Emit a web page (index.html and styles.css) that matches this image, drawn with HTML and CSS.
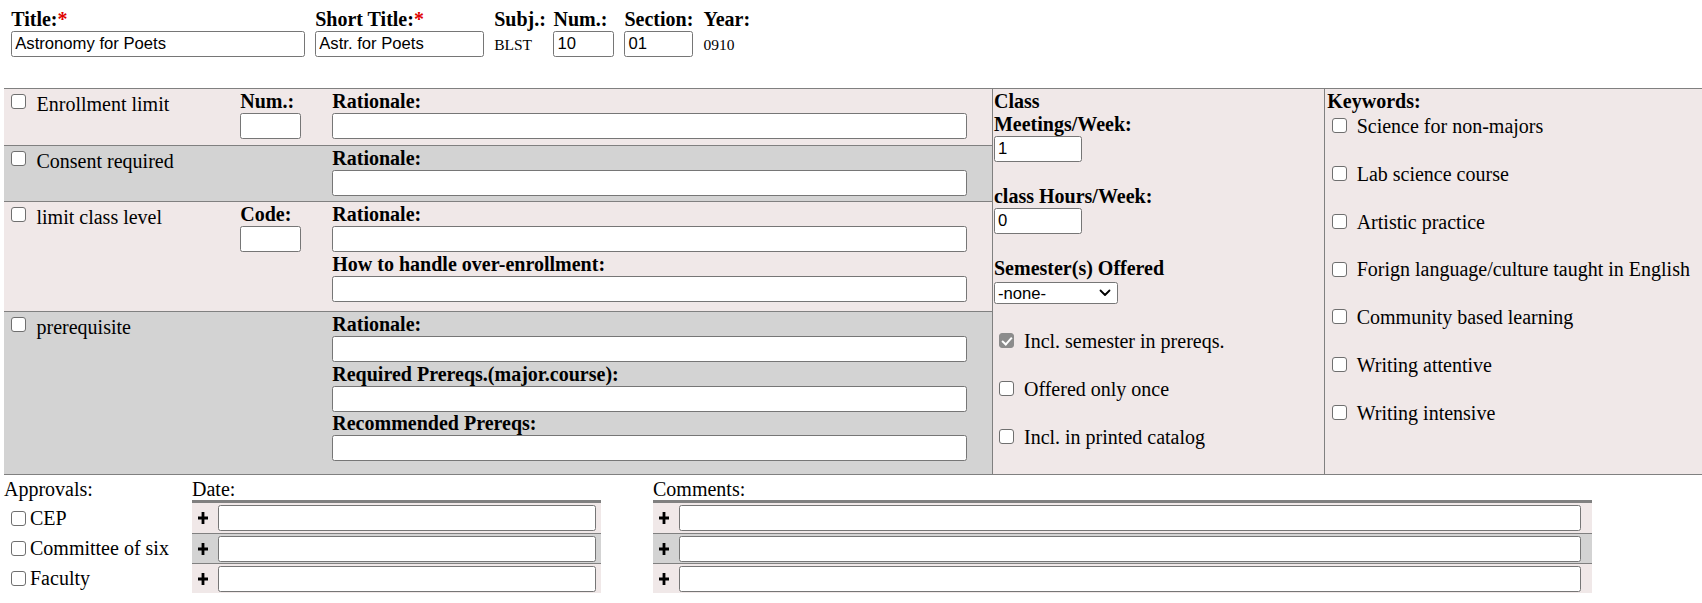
FILE: index.html
```html
<!DOCTYPE html>
<html lang="en">
<head>
<meta charset="utf-8">
<title>Course form</title>
<link rel="stylesheet" href="styles.css">
</head>
<body>
<header class="head">
  <div class="fld">
    <span class="lbl">Title:<span class="req">*</span></span>
    <input class="txt w-title" type="text" value="Astronomy for Poets">
  </div>
  <div class="fld">
    <span class="lbl">Short Title:<span class="req">*</span></span>
    <input class="txt w-short" type="text" value="Astr. for Poets">
  </div>
  <div class="fld">
    <span class="lbl">Subj.:</span>
    <span class="val">BLST</span>
  </div>
  <div class="fld">
    <span class="lbl">Num.:</span>
    <input class="txt w-num" type="text" value="10">
  </div>
  <div class="fld">
    <span class="lbl">Section:</span>
    <input class="txt w-sec" type="text" value="01">
  </div>
  <div class="fld">
    <span class="lbl">Year:</span>
    <span class="val">0910</span>
  </div>
</header>

<section class="main">
  <div class="reqs">
    <div class="rq light r1">
      <div class="chkcell"><input class="cb" type="checkbox"><span>Enrollment limit</span></div>
      <div class="mid"><span class="lbl">Num.:</span><input class="txt w-small" type="text"></div>
      <div class="wide"><span class="lbl">Rationale:</span><input class="txt w-rat" type="text"></div>
    </div>
    <div class="rq gray r2">
      <div class="chkcell"><input class="cb" type="checkbox"><span>Consent required</span></div>
      <div class="mid"></div>
      <div class="wide"><span class="lbl">Rationale:</span><input class="txt w-rat" type="text"></div>
    </div>
    <div class="rq light r3">
      <div class="chkcell"><input class="cb" type="checkbox"><span>limit class level</span></div>
      <div class="mid"><span class="lbl">Code:</span><input class="txt w-small" type="text"></div>
      <div class="wide">
        <span class="lbl">Rationale:</span><input class="txt w-rat" type="text">
        <span class="lbl">How to handle over-enrollment:</span><input class="txt w-rat" type="text">
      </div>
    </div>
    <div class="rq gray r4">
      <div class="chkcell"><input class="cb" type="checkbox"><span>prerequisite</span></div>
      <div class="mid"></div>
      <div class="wide">
        <span class="lbl">Rationale:</span><input class="txt w-rat" type="text">
        <span class="lbl">Required Prereqs.(major.course):</span><input class="txt w-rat" type="text">
        <span class="lbl">Recommended Prereqs:</span><input class="txt w-rat" type="text">
      </div>
    </div>
  </div>

  <div class="meet">
    <span class="lbl">Class<br>Meetings/Week:</span>
    <input class="txt w-meet" type="text" value="1">
    <span class="lbl sp">class Hours/Week:</span>
    <input class="txt w-meet" type="text" value="0">
    <span class="lbl sp">Semester(s) Offered</span>
    <span class="selwrap">
      <select class="sel"><option>-none-</option></select>
      <svg class="chev" width="12" height="8" viewBox="0 0 12 8"><path d="M1.5 1.5 6 6l4.5-4.5" fill="none" stroke="#000" stroke-width="1.8" stroke-linecap="round" stroke-linejoin="round"/></svg>
    </span>
    <div class="opts">
      <label class="opt"><input class="cb" type="checkbox" checked><span>Incl. semester in prereqs.</span></label>
      <label class="opt"><input class="cb" type="checkbox"><span>Offered only once</span></label>
      <label class="opt"><input class="cb" type="checkbox"><span>Incl. in printed catalog</span></label>
    </div>
  </div>

  <div class="kw">
    <span class="lbl">Keywords:</span>
    <div class="kwlist">
      <label class="kwi"><input class="cb" type="checkbox"><span>Science for non-majors</span></label>
      <label class="kwi"><input class="cb" type="checkbox"><span>Lab science course</span></label>
      <label class="kwi"><input class="cb" type="checkbox"><span>Artistic practice</span></label>
      <label class="kwi"><input class="cb" type="checkbox"><span>Forign language/culture taught in English</span></label>
      <label class="kwi"><input class="cb" type="checkbox"><span>Community based learning</span></label>
      <label class="kwi"><input class="cb" type="checkbox"><span>Writing attentive</span></label>
      <label class="kwi"><input class="cb" type="checkbox"><span>Writing intensive</span></label>
    </div>
  </div>
</section>

<section class="appr">
  <div class="acol">
    <div class="ahead">Approvals:</div>
    <div class="alist">
      <label class="ai"><input class="cb" type="checkbox"><span>CEP</span></label>
      <label class="ai"><input class="cb" type="checkbox"><span>Committee of six</span></label>
      <label class="ai"><input class="cb" type="checkbox"><span>Faculty</span></label>
    </div>
  </div>
  <div class="dcol">
    <div class="ahead">Date:</div>
    <div class="dt">
      <div class="dr light"><span class="plus"><svg width="10" height="12" viewBox="0 0 10 12"><path d="M3.6 0h2.8v4.6H10v2.8H6.4V12H3.6V7.4H0V4.6h3.6z"/></svg></span><input class="txt w-date" type="text"></div>
      <div class="dr gray"><span class="plus"><svg width="10" height="12" viewBox="0 0 10 12"><path d="M3.6 0h2.8v4.6H10v2.8H6.4V12H3.6V7.4H0V4.6h3.6z"/></svg></span><input class="txt w-date" type="text"></div>
      <div class="dr light"><span class="plus"><svg width="10" height="12" viewBox="0 0 10 12"><path d="M3.6 0h2.8v4.6H10v2.8H6.4V12H3.6V7.4H0V4.6h3.6z"/></svg></span><input class="txt w-date" type="text"></div>
    </div>
  </div>
  <div class="ccol">
    <div class="ahead">Comments:</div>
    <div class="dt">
      <div class="dr light"><span class="plus"><svg width="10" height="12" viewBox="0 0 10 12"><path d="M3.6 0h2.8v4.6H10v2.8H6.4V12H3.6V7.4H0V4.6h3.6z"/></svg></span><input class="txt w-com" type="text"></div>
      <div class="dr gray"><span class="plus"><svg width="10" height="12" viewBox="0 0 10 12"><path d="M3.6 0h2.8v4.6H10v2.8H6.4V12H3.6V7.4H0V4.6h3.6z"/></svg></span><input class="txt w-com" type="text"></div>
      <div class="dr light"><span class="plus"><svg width="10" height="12" viewBox="0 0 10 12"><path d="M3.6 0h2.8v4.6H10v2.8H6.4V12H3.6V7.4H0V4.6h3.6z"/></svg></span><input class="txt w-com" type="text"></div>
    </div>
  </div>
</section>
</body>
</html>
```

FILE: styles.css
```css
* { box-sizing: border-box; }

body {
  margin: 0;
  font-family: "Liberation Serif", "Times New Roman", serif;
  font-size: 20px;
  line-height: 23px;
  color: #000;
  background: #fff;
}

.light { background: #f0e8e8; }
.gray { background: #d3d3d3; }

.lbl {
  display: block;
  font-weight: bold;
  line-height: 23px;
  white-space: nowrap;
}
.req { color: #e00000; }

.txt {
  display: block;
  height: 26px;
  margin: 0;
  padding: 1px 3px;
  border: 1px solid #767676;
  border-radius: 2.5px;
  background: #fff;
  color: #000;
  font-family: "Liberation Sans", Arial, sans-serif;
  font-size: 16.67px;
}

/* header */
.head {
  display: grid;
  grid-template-columns: 294px 169px 49.3px 61px 69px auto;
  column-gap: 10px;
  justify-content: start;
  padding: 8px 0 0 11.2px;
}
.fld { display: flex; flex-direction: column; }
.val {
  height: 26px;
  display: flex;
  align-items: center;
  font-size: 15.5px;
}
.w-title { width: 294px; }
.w-short { width: 169px; }
.w-num { width: 61px; }
.w-sec { width: 69px; }

/* main block */
.main {
  margin: 31px 0 0 4px;
  display: grid;
  grid-template-columns: 987.7px 332.6px 1fr;
  border-top: 1px solid #808080;
  border-bottom: 1px solid #808080;
}
.reqs { display: flex; flex-direction: column; }
.rq {
  display: grid;
  grid-template-columns: 236.3px 92px 1fr;
  padding-top: 1px;
}
.rq + .rq { border-top: 1px solid #808080; }
.r1 { height: 56px; }
.r2 { height: 56px; }
.r3 { height: 110px; }
.r4 { height: 163px; }

.chkcell {
  display: flex;
  align-items: flex-start;
  padding: 2.5px 0 0 7px;
  gap: 10.5px;
}
.chkcell .cb { margin-top: 1.5px; }
.mid, .wide { display: flex; flex-direction: column; align-items: flex-start; }
.wide .txt { margin-bottom: 0.5px; }
.w-small { width: 61px; }
.w-rat { width: 634.4px; }

.cb {
  appearance: none;
  -webkit-appearance: none;
  position: relative;
  flex: none;
  width: 15px;
  height: 15px;
  margin: 0;
  border: 1px solid #6f6f6f;
  border-radius: 3px;
  background: #fff;
}
.cb:checked {
  background: #8c8c8c;
  border-color: #8c8c8c;
}
.cb:checked::after {
  content: "";
  position: absolute;
  left: 4.1px;
  top: 0.8px;
  width: 3.8px;
  height: 8px;
  border: solid #fff;
  border-width: 0 2.2px 2.2px 0;
  transform: rotate(42deg);
}

.meet {
  border-left: 1px solid #808080;
  background: #f0e8e8;
  padding: 1px 0 0 1.3px;
}
.w-meet { width: 88px; }
.sp { margin-top: 23px; }
.selwrap {
  position: relative;
  display: block;
  width: 124px;
  margin-top: 2px;
}
.sel {
  appearance: none;
  -webkit-appearance: none;
  display: block;
  width: 124px;
  height: 22px;
  padding: 0 20px 0 3px;
  border: 1px solid #767676;
  border-radius: 2.5px;
  background: #fff;
  color: #000;
  font-family: "Liberation Sans", Arial, sans-serif;
  font-size: 16.67px;
}
.chev {
  position: absolute;
  right: 7px;
  top: 7px;
  pointer-events: none;
}
.opts { margin-top: 23px; display: flex; flex-direction: column; }
.opt {
  display: flex;
  align-items: flex-start;
  height: 48px;
  padding-left: 4.7px;
  gap: 10.3px;
}
.opt span { margin-top: 3px; }
.opt .cb { margin-top: 6.2px; }

.kw {
  border-left: 1px solid #808080;
  background: #f0e8e8;
  padding: 1px 0 0 2px;
}
.kwlist { margin-top: 2px; display: flex; flex-direction: column; }
.kwi {
  display: flex;
  align-items: flex-start;
  height: 47.8px;
  padding-left: 5px;
  gap: 9.4px;
}
.kwi .cb { margin-top: 3.2px; }

/* approvals */
.appr {
  display: flex;
  align-items: flex-start;
  margin-left: 4px;
  padding-top: 3px;
}
.ahead { line-height: 22px; height: 22px; white-space: nowrap; }
.acol { width: 188px; }
.alist { margin-top: 3px; display: flex; flex-direction: column; }
.ai {
  display: flex;
  align-items: center;
  height: 30px;
  padding-left: 7px;
  gap: 4px;
}
.dcol { width: 409px; }
.ccol { width: 939px; margin-left: 52px; }
.dt { border-top: 3px solid #808080; }
.dr {
  display: flex;
  align-items: center;
  height: 30px;
}
.dr + .dr { border-top: 1px solid #808080; }
.plus {
  width: 26px;
  display: flex;
  justify-content: center;
  padding-right: 4px;
}
.plus svg { display: block; fill: #000; }
.w-date { width: 378px; }
.w-com { width: 902px; }
```
